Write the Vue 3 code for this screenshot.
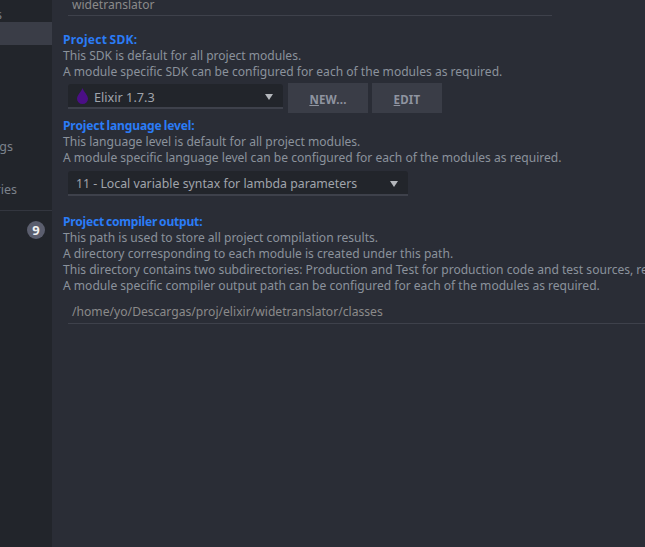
<script setup>
const sdkLines = ['This SDK is default for all project modules.', 'A module specific SDK can be configured for each of the modules as required.']
const langLines = ['This language level is default for all project modules.', 'A module specific language level can be configured for each of the modules as required.']
const outLines = [
  'This path is used to store all project compilation results.',
  'A directory corresponding to each module is created under this path.',
  'This directory contains two subdirectories: Production and Test for production code and test sources, respectively.',
  'A module specific compiler output path can be configured for each of the modules as required.'
]
</script>

<template>
  <div class="window">
    <aside class="side">
      <div class="item top"><span class="clip p50">Modules</span></div>
      <div class="item sel"></div>
      <div class="item settings"><span class="clip p39">Settings</span></div>
      <div class="item libs"><span class="clip p35">Libraries</span></div>
      <div class="rule"></div>
      <div class="item problems"><span class="badge">9</span></div>
    </aside>
    <main class="main">
      <div class="name"><span>widetranslator</span></div>

      <h3 class="head first">Project SDK:</h3>
      <p v-for="l in sdkLines" :key="l">{{ l }}</p>
      <div class="row sdk">
        <div class="combo w-sdk">
          <svg class="drop" width="11" height="16" viewBox="0 0 11 16"><path d="M5.5 0C6.5 3.5 11 7 11 10.8A5.5 5.2 0 0 1 0 10.8C0 7 4.5 3.5 5.5 0Z" fill="#4b0f86"/></svg>
          <span class="val elixir">Elixir 1.7.3</span>
          <i class="arrow"></i>
        </div>
        <button class="btn b-new"><u>N</u>EW...</button>
        <button class="btn b-edit"><u>E</u>DIT</button>
      </div>

      <h3 class="head second">Project language level:</h3>
      <p v-for="l in langLines" :key="l">{{ l }}</p>
      <div class="row lang">
        <div class="combo w-lang">
          <span class="val">11 - Local variable syntax for lambda parameters</span>
          <i class="arrow"></i>
        </div>
      </div>

      <h3 class="head third">Project compiler output:</h3>
      <p v-for="l in outLines" :key="l" class="nowrap">{{ l }}</p>
      <div class="path"><span>/home/yo/Descargas/proj/elixir/widetranslator/classes</span></div>
    </main>
  </div>
</template>

<style>
html, body { margin: 0; background: #2a2d36; }
</style>

<style scoped>
.window {
  display: flex;
  width: 645px;
  height: 547px;
  overflow: hidden;
  background: #2a2d36;
  font-family: "Noto Sans", sans-serif;
  font-size: 12.07px;
  color: #8b929c;
}
.side {
  width: 52px;
  flex: none;
  background: #22252b;
  display: flex;
  flex-direction: column;
}
.item {
  display: flex;
  justify-content: flex-end;
  align-items: center;
  overflow: hidden;
  white-space: nowrap;
  color: #7c828c;
  font-size: 12.5px;
}
.top { height: 22px; padding-top: 6px; box-sizing: border-box; }
.sel { height: 23px; background: #3a3d47; }
.settings { height: 20px; margin-top: 91px; }
.libs { height: 20px; margin-top: 23px; }
.clip { flex: none; }
.p50 { padding-right: 50px; }
.p39 { padding-right: 39px; }
.p35 { padding-right: 35px; }
.rule { height: 1px; background: #33363f; margin-top: 11px; }
.problems { height: 20px; margin-top: 9px; padding-right: 7px; }
.badge {
  width: 18px;
  height: 18px;
  border-radius: 50%;
  background: #5b5e6e;
  color: #f0f0f0;
  font-weight: 700;
  font-size: 13px;
  line-height: 18px;
  text-align: center;
}
.main {
  flex: 1;
  min-width: 0;
  padding-left: 11px;
  overflow: hidden;
}
.name {
  height: 16px;
  margin-left: 5px;
  width: 484px;
  border-bottom: 1px solid #3e414b;
  line-height: 10px;
  padding-left: 4px;
  box-sizing: border-box;
  color: #8a8a8a;
}
.head {
  margin: 0;
  font-size: 12.07px;
  line-height: 16px;
  font-weight: 700;
  color: #2b7cf6;
  word-spacing: -1px;
}
.first { margin-top: 16px; letter-spacing: 0.25px; }
.second { margin-top: 5px; letter-spacing: -0.13px; }
.third { margin-top: 18px; letter-spacing: -0.21px; }
p {
  margin: 0;
  line-height: 16px;
  white-space: nowrap;
}
.row {
  display: flex;
  gap: 4px;
}
.sdk { margin-top: 4px; }
.lang { margin-top: 5px; }
.combo {
  height: 25px;
  margin-left: 5px;
  box-sizing: border-box;
  background: #22252b;
  border-bottom: 2px solid #3e414b;
  border-radius: 3px 3px 0 0;
  display: flex;
  align-items: center;
  padding: 2px 10px 0 8px;
  color: #a0a4ab;
  font-size: 12.3px;
}
.w-sdk { width: 215px; }
.w-lang { width: 340px; }
.drop { margin-left: 1px; margin-right: 6px; margin-top: -2px; }
.val { flex: 1; white-space: nowrap; }
.elixir { font-size: 12.7px; }
.arrow {
  width: 0;
  height: 0;
  border-left: 4px solid transparent;
  border-right: 4px solid transparent;
  border-top: 6px solid #b4b7bc;
}
.btn {
  height: 30px;
  margin-top: -1px;
  border: 0;
  padding: 2px 0 0;
  background: #3a3d47;
  color: #8f94a0;
  font: 700 11.5px "Noto Sans", sans-serif;
  letter-spacing: 0.2px;
}
.b-new { width: 80px; margin-left: 1px; }
.b-edit { width: 70px; }
.path {
  margin-top: 8px;
  margin-left: 5px;
  height: 22px;
  border-bottom: 1px solid #3e414b;
  box-sizing: border-box;
  line-height: 20px;
  padding-left: 4px;
  color: #8a8a8a;
  font-size: 12.15px;
  white-space: nowrap;
}
</style>
